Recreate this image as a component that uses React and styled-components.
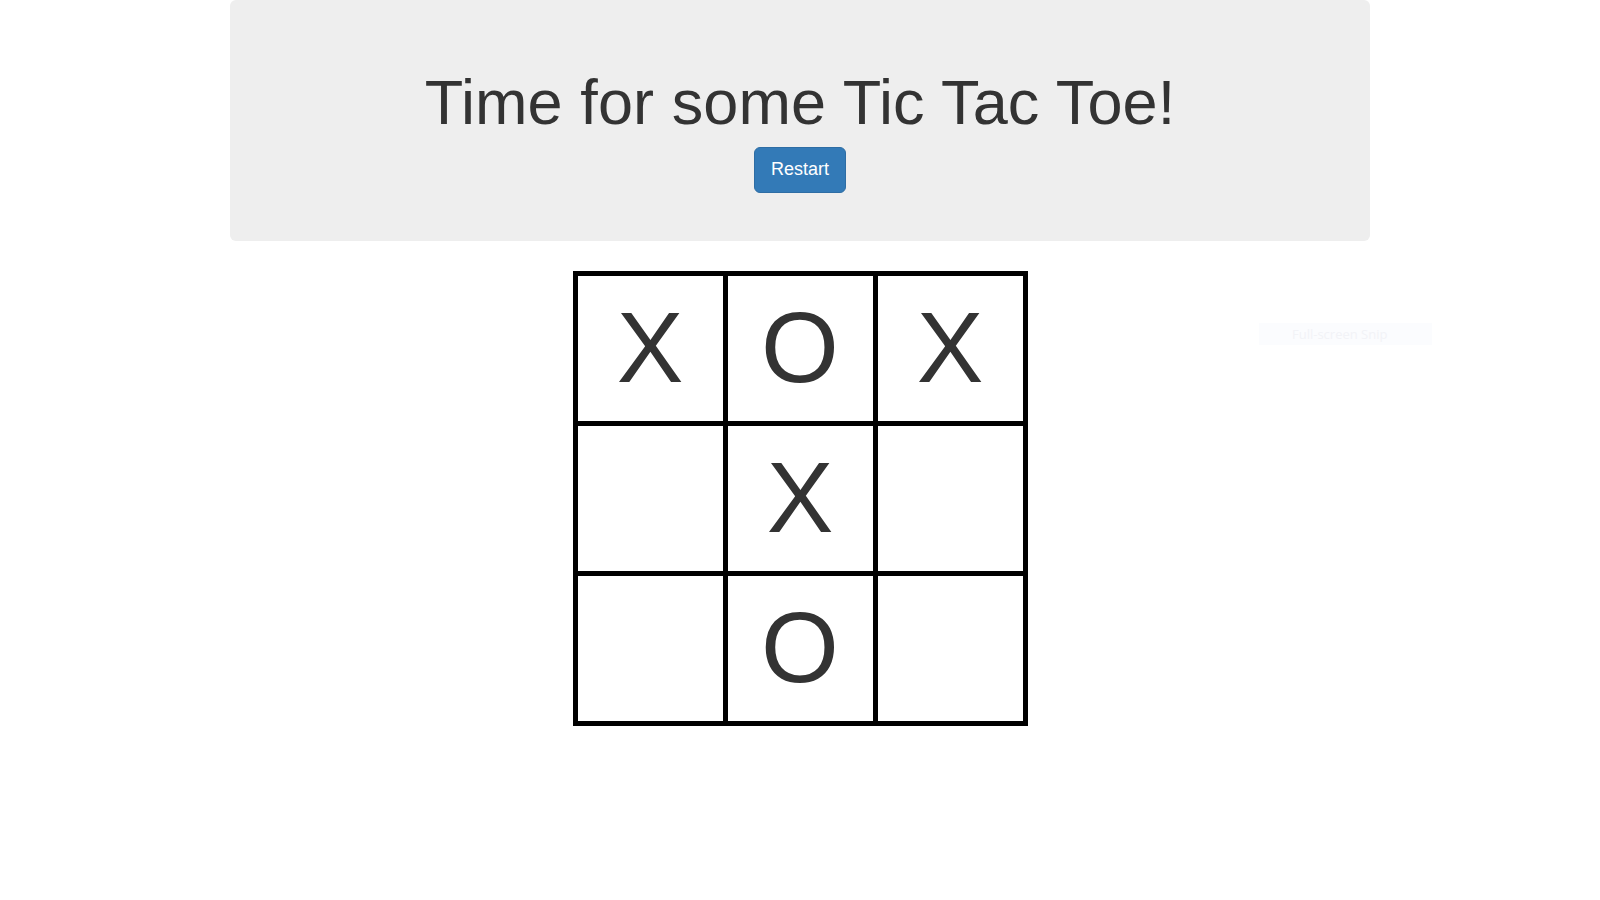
import React, { useState } from "react";
import styled, { createGlobalStyle } from "styled-components";

const GlobalStyle = createGlobalStyle`
  html, body {
    margin: 0;
    padding: 0;
    background: #fff;
    font-family: "Liberation Sans", Arial, Helvetica, sans-serif;
    font-size: 14px;
    color: #333;
  }
`;

const START = ["X", "O", "X", "", "X", "", "", "O", ""];

export default function App() {
  const [cells, setCells] = useState(START);

  return (
    <>
      <GlobalStyle />
      <Page>
        <Jumbotron>
          <Title>Time for some Tic Tac Toe!</Title>
          <Button onClick={() => setCells(Array(9).fill(""))}>Restart</Button>
        </Jumbotron>
        <Board>
          {cells.map((c, i) => (
            <Cell key={i}>{c}</Cell>
          ))}
        </Board>
        <Snip>Full-screen Snip</Snip>
      </Page>
    </>
  );
}

const Page = styled.div`
  position: relative;
  width: 1140px;
  margin: 0 auto;
  display: flex;
  flex-direction: column;
  align-items: center;
`;

const Jumbotron = styled.div`
  width: 100%;
  box-sizing: border-box;
  background: #eee;
  border-radius: 6px;
  padding: 48px 60px;
  margin-bottom: 30px;
  text-align: center;
`;

const Title = styled.h1`
  margin: 20px 0 10px;
  font-size: 63px;
  font-weight: 500;
  line-height: 1.1;
  letter-spacing: 0.1px;
  color: #333;
`;

const Button = styled.button`
  display: inline-block;
  box-sizing: border-box;
  padding: 10px 16px;
  font-family: inherit;
  font-size: 18px;
  line-height: 1.3333;
  color: #fff;
  background: #337ab7;
  border: 1px solid #2e6da4;
  border-radius: 6px;
  cursor: pointer;

  :hover {
    background: #286090;
  }
`;

const Board = styled.div`
  display: grid;
  grid-template-columns: repeat(3, 145px);
  grid-template-rows: repeat(3, 145px);
  gap: 5px;
  padding: 5px;
  background: #000;
`;

const Cell = styled.div`
  background: #fff;
  font-size: 100px;
  line-height: 142px;
  text-align: center;
  color: #333;
`;

const Snip = styled.div`
  position: absolute;
  top: 323px;
  left: 1029px;
  width: 173px;
  height: 22px;
  box-sizing: border-box;
  padding-left: 33px;
  background: #fbfcfe;
  color: #f2f3f7;
  font-family: "Open Sans", "Noto Sans", sans-serif;
  font-size: 13px;
  line-height: 22px;
`;
